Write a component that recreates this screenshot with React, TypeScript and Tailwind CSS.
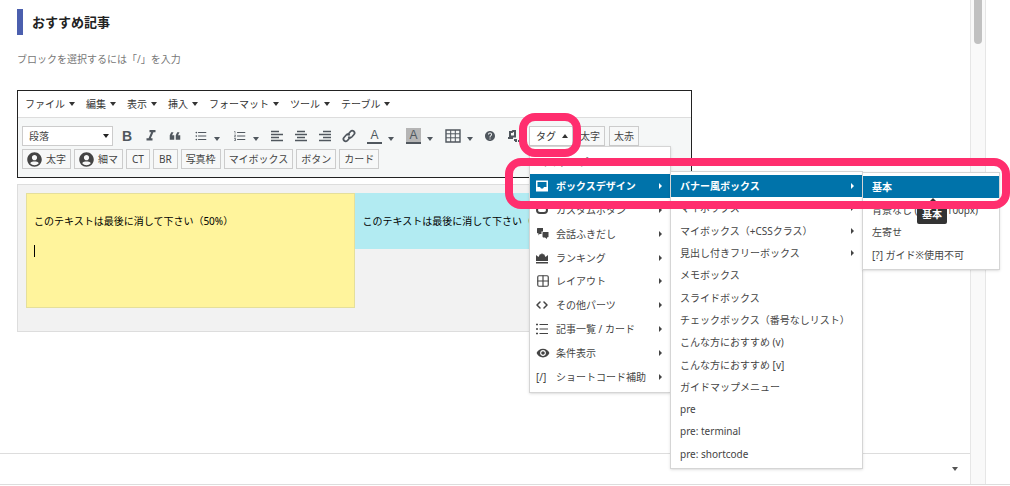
import type { ReactNode } from "react";
import clsx from "clsx";
import { Grid2x2, Code } from "lucide-react";
import {
  MdFormatItalic,
  MdFormatListBulleted,
  MdFormatListNumbered,
  MdFormatQuote,
  MdHelp,
  MdRemoveRedEye,
} from "react-icons/md";
import { FaUserCircle } from "react-icons/fa";

interface MenuEntry {
  label: string;
  icon?: ReactNode;
  arrow?: boolean;
  children?: ReactNode;
}

const MENUS = ["ファイル", "編集", "表示", "挿入", "フォーマット", "ツール", "テーブル"];

function Caret({ up = false, className }: { up?: boolean; className?: string }) {
  return (
    <svg className={clsx("h-1 w-1.5 shrink-0", className)} viewBox="0 0 6 4" fill="currentColor">
      <path d={up ? "M0 4h6L3 0z" : "M0 0h6L3 4z"} />
    </svg>
  );
}

function AlignIcon({ d }: { d: string }) {
  return (
    <svg className="h-3 w-3" viewBox="0 0 12 12" stroke="currentColor" strokeWidth="1.7">
      <path d={d} />
    </svg>
  );
}

function LinkIcon() {
  return (
    <svg
      className="h-3.5 w-3.5"
      viewBox="0 0 14 14"
      fill="none"
      stroke="currentColor"
      strokeWidth="1.7"
      strokeLinecap="round"
    >
      <path d="M6 5.500l2.500-3a2.300 2.300 0 0 1 3.500 3L9.800 8a2.300 2.300 0 0 1-3 .2" />
      <path d="M8 8.500l-2.500 3a2.300 2.300 0 0 1-3.500-3L4.200 6a2.300 2.300 0 0 1 3-.2" />
    </svg>
  );
}

function TableIcon() {
  return (
    <svg className="h-3.5 w-4" viewBox="0 0 16 14" fill="none" stroke="currentColor">
      <path strokeWidth="1.4" d="M1 1h14v12H1z" />
      <path d="M1 4.8h14M1 8.8h14M5.7 1v12M10.3 1v12" />
    </svg>
  );
}

function SwapIcon() {
  return (
    <svg className="h-3.5 w-3.5" viewBox="0 0 14 14" fill="none" stroke="currentColor">
      <path strokeWidth="2" d="M3 3h2l1-1h2v5.500H3zM1 9h5" />
      <path strokeWidth="2" d="M7 11h2v2M12 11v2" />
    </svg>
  );
}

function InboxIcon() {
  return (
    <svg className="h-3 w-3" viewBox="0 0 12 12">
      <path fill="currentColor" fillRule="evenodd" d="M0 .5h12v11H0zM1.500 2v5H4l1 1.500h2L8 7h2.500V2z" />
    </svg>
  );
}

function ChatIcon() {
  return (
    <svg className="h-3.5 w-3.5" viewBox="0 0 14 14" fill="currentColor">
      <path d="M1.500 1h5.500v3.500H5.500V7L3.500 7 2.500 8.500V6.500L1 6V1.500z" />
      <path d="M6.500 5.500 7 5h5.500v5l-1.500.5V12L9 10.500H7l-.5-1z" />
    </svg>
  );
}

function CrownIcon() {
  return (
    <svg className="h-3 w-3" viewBox="0 0 12 12" fill="currentColor">
      <path d="M0 3l2.500 2L4 2l1 .5L6 1l1 1.500L8 2l1.500 3L12 3v6H0zM0 10h12v1.500H0z" />
    </svg>
  );
}

function ListIcon() {
  return (
    <svg className="h-3 w-3" viewBox="0 0 12 12" stroke="currentColor">
      <path strokeWidth="1.6" d="M0 1.500h2M0 6h2M0 10.500h2" />
      <path strokeWidth="1.200" d="M3.500 1.500H12M3.500 6H12M3.500 10.500H12" />
    </svg>
  );
}

function CapsuleIcon() {
  return (
    <svg className="h-3 w-3" viewBox="0 0 12 12" fill="none" stroke="currentColor" strokeWidth="2">
      <rect x="1" y="3" width="10" height="6" rx="3" />
    </svg>
  );
}

function Tool({ label, caret, children }: { label: string; caret?: boolean; children: ReactNode }) {
  return (
    <button
      type="button"
      aria-label={label}
      className={clsx(
        "flex h-5 shrink-0 items-center justify-center text-[#50575e]",
        caret ? "w-[39px] gap-1.5" : "w-6",
      )}
    >
      {children}
      {caret && <Caret className="mt-1.5" />}
    </button>
  );
}

function TextButton({ children, className }: { children: ReactNode; className?: string }) {
  return (
    <button
      type="button"
      className={clsx(
        "flex h-5 shrink-0 items-center gap-1 whitespace-nowrap border border-[#ccc] bg-[#f7f8f8] px-1 text-[#444]",
        className,
      )}
    >
      {children}
    </button>
  );
}

function MenuList({ entries, className }: { entries: MenuEntry[]; className?: string }) {
  return (
    <ul
      className={clsx(
        "absolute grid auto-rows-fr border border-[#d5d5d5] bg-white py-[3px] text-[#444] shadow-sm",
        className,
      )}
    >
      {entries.map((entry) => (
        <li
          key={entry.label}
          className={clsx("relative flex", entry.children && "bg-[#0073aa] font-bold text-white")}
        >
          <button
            type="button"
            className={clsx("flex w-full items-center whitespace-nowrap pr-2", entry.icon ? "pl-1.5" : "pl-[9px]")}
          >
            {entry.icon && <span className="flex w-5 items-center">{entry.icon}</span>}
            {entry.label}
            {entry.arrow && (
              <svg className="ml-auto h-1.5 w-[3px]" viewBox="0 0 3 6" fill="currentColor">
                <path d="M0 0v6l3-3z" />
              </svg>
            )}
          </button>
          {entry.children}
        </li>
      ))}
    </ul>
  );
}

const tooltip = (
  <span
    role="tooltip"
    className="absolute left-[54px] top-[30px] z-10 rounded-xs bg-[#333] px-[5px] pb-0.5 font-bold text-white"
  >
    <svg className="absolute left-3 -top-2 h-2 w-2" viewBox="0 0 8 8" fill="#333">
      <path d="M4 0l4 4v4H0V4z" />
    </svg>
    基本
  </span>
);

const variants: MenuEntry[] = [
  { label: "基本", children: tooltip },
  { label: "背景なし (width:100px)" },
  { label: "左寄せ" },
  { label: "[?] ガイド※使用不可" },
];

const boxes: MenuEntry[] = [
  {
    label: "バナー風ボックス",
    arrow: true,
    children: <MenuList entries={variants} className="left-full -top-[3px] min-h-[98px] w-[138px] font-normal" />,
  },
  { label: "マイボックス", arrow: true },
  { label: "マイボックス（+CSSクラス）", arrow: true },
  { label: "見出し付きフリーボックス", arrow: true },
  { label: "メモボックス" },
  { label: "スライドボックス" },
  { label: "チェックボックス（番号なしリスト）" },
  { label: "こんな方におすすめ (v)" },
  { label: "こんな方におすすめ [v]" },
  { label: "ガイドマップメニュー" },
  { label: "pre" },
  { label: "pre: terminal" },
  { label: "pre: shortcode" },
];

const tags: MenuEntry[] = [
  { label: "マイテンプレ" },
  {
    label: "ボックスデザイン",
    icon: <InboxIcon />,
    arrow: true,
    children: <MenuList entries={boxes} className="left-full -top-[3px] min-h-[298px] w-[193px] font-normal" />,
  },
  { label: "カスタムボタン", icon: <CapsuleIcon />, arrow: true },
  { label: "会話ふきだし", icon: <ChatIcon />, arrow: true },
  { label: "ランキング", icon: <CrownIcon />, arrow: true },
  { label: "レイアウト", icon: <Grid2x2 className="h-3.5 w-3.5" />, arrow: true },
  { label: "その他パーツ", icon: <Code className="h-3 w-3" strokeWidth={3} />, arrow: true },
  { label: "記事一覧 / カード", icon: <ListIcon />, arrow: true },
  { label: "条件表示", icon: <MdRemoveRedEye className="h-3.5 w-3.5" />, arrow: true },
  { label: "ショートコード補助", icon: "[/]", arrow: true },
];

function TagMenu() {
  return (
    <div className="relative z-10 ml-[3px] mr-0.5 w-11 shrink-0">
      <button
        type="button"
        aria-expanded="true"
        className="flex h-5 w-full items-center justify-between border border-[#ccc] bg-white pl-1.5 pr-1 text-[#333]"
      >
        タグ
        <Caret up />
      </button>
      <MenuList entries={tags} className="left-0 top-full min-h-[247px] w-[142px]" />
      <div className="pointer-events-none absolute -left-2.5 -top-[13px] z-20 h-11 w-[62px] rounded-2xl border-8 border-[#ff2e6e]" />
      <div className="pointer-events-none absolute -left-6 top-8 z-20 h-[51px] w-[505px] rounded-2xl border-8 border-[#ff2e6e]" />
    </div>
  );
}

function Toolbar() {
  return (
    <div className="bg-[#f5f7f7] px-1 pb-2 pt-2">
      <div className="flex">
        <label className="relative mr-0.5 w-[91px] shrink-0">
          <span className="sr-only">書式</span>
          <select className="block h-5 w-full appearance-none border border-[#ccc] bg-white px-1.5 leading-[18px] text-[#444]">
            <option>段落</option>
          </select>
          <Caret className="absolute right-1 top-2" />
        </label>
        <Tool label="太字">
          <b className="font-['Liberation_Sans'] text-sm">B</b>
        </Tool>
        <Tool label="斜体">
          <MdFormatItalic className="h-[18px] w-[18px]" />
        </Tool>
        <Tool label="引用">
          <MdFormatQuote className="h-[18px] w-[18px] rotate-180" />
        </Tool>
        <Tool label="箇条書き" caret>
          <MdFormatListBulleted className="h-3.5 w-3.5" />
        </Tool>
        <Tool label="番号付きリスト" caret>
          <MdFormatListNumbered className="h-3.5 w-3.5" />
        </Tool>
        <Tool label="左寄せ">
          <AlignIcon d="M0 1.500h8M0 4.500h12M0 7.500h8M0 10.500h12" />
        </Tool>
        <Tool label="中央揃え">
          <AlignIcon d="M2 1.500h8M0 4.500h12M2 7.500h8M0 10.500h12" />
        </Tool>
        <Tool label="右寄せ">
          <AlignIcon d="M4 1.500h8M0 4.500h12M4 7.500h8M0 10.500h12" />
        </Tool>
        <Tool label="リンク">
          <LinkIcon />
        </Tool>
        <Tool label="文字色" caret>
          <span className="w-[15px] border-b-2 border-[#50575e] font-['Liberation_Sans'] text-xs leading-[14px]">A</span>
        </Tool>
        <Tool label="背景色" caret>
          <span className="w-[15px] border-b-2 border-[#50575e] bg-[#b5b5b5] font-['Liberation_Sans'] text-xs leading-[14px]">
            A
          </span>
        </Tool>
        <Tool label="表" caret>
          <TableIcon />
        </Tool>
        <Tool label="ヘルプ">
          <MdHelp className="h-3 w-3" />
        </Tool>
        <Tool label="検索置換">
          <SwapIcon />
        </Tool>
        <TagMenu />
        <TextButton>太字</TextButton>
        <TextButton className="ml-1">太赤</TextButton>
      </div>
      <div className="mt-[3px] flex items-start gap-[3px]">
        <TextButton>
          <FaUserCircle className="h-[15px] w-[15px]" />
          太字
        </TextButton>
        <TextButton>
          <FaUserCircle className="h-[15px] w-[15px]" />
          細マ
        </TextButton>
        <TextButton className="px-[5px]">CT</TextButton>
        <TextButton className="px-[5px]">BR</TextButton>
        <TextButton>写真枠</TextButton>
        <TextButton>マイボックス</TextButton>
        <TextButton>ボタン</TextButton>
        <TextButton>カード</TextButton>
      </div>
    </div>
  );
}

export default function App() {
  return (
    <div className="flex min-h-screen flex-col overflow-hidden bg-white pb-px font-['Noto_Sans','Noto_Sans_CJK_JP',sans-serif] text-[10px] leading-4 text-[#222]">
      <div className="flex flex-1 border-b border-[#ddd]">
        <main className="flex min-w-0 flex-1 flex-col">
          <div className="flex-1 px-[17px] pt-[9px]">
            <h2 className="border-l-[6px] border-[#4b5fae] pl-[9px] text-[13px] font-bold leading-[26px]">
              おすすめ記事
            </h2>
            <p className="mt-4 text-[#777]">ブロックを選択するには「/」を入力</p>
            <div className="mt-[23px] max-w-[675px] border border-[#222]">
              <nav className="flex h-[27px] items-center gap-[11px] border-b border-[#ddd] px-[7px] text-[#333]">
                {MENUS.map((name) => (
                  <button key={name} type="button" className="flex items-center gap-1">
                    {name}
                    <Caret />
                  </button>
                ))}
              </nav>
              <Toolbar />
            </div>
            <div className="mt-1.5 flex max-w-[675px] items-start border border-[#ddd] bg-[#f2f2f2] px-2 pb-[23px] pt-2">
              <div className="min-h-[115px] flex-1 border border-[#e5df9b] bg-[#fff49c] px-[7px] py-[19px] text-black">
                <p>このテキストは最後に消して下さい（50%）</p>
                <p className="mt-4 h-3 border-l border-black" />
              </div>
              <div className="flex-1 bg-[#b2ebf2] px-2 py-5 text-black">
                <p>このテキストは最後に消して下さい（50%）</p>
              </div>
            </div>
          </div>
          <div className="flex h-[31px] items-center justify-end border-t border-[#ddd] pr-3 text-[#555]">
            <Caret />
          </div>
        </main>
        <div className="w-4 shrink-0 border-x border-[#e6e6e6] bg-[#f9f9f9]">
          <div className="mx-auto h-11 w-2 rounded-b-full bg-[#c1c1c1]" />
        </div>
        <div className="w-6 shrink-0" />
      </div>
    </div>
  );
}
